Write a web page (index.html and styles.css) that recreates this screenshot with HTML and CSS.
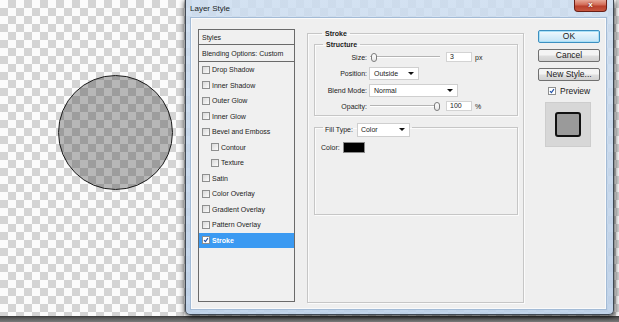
FILE: index.html
```html
<!DOCTYPE html>
<html lang="en">
<head>
  <meta charset="UTF-8">
  <meta name="viewport" content="width=device-width, initial-scale=1.0">
  <title>Layer Style</title>
  <link rel="stylesheet" href="styles.css">
</head>
<body>
  <main class="stage">
    <div class="circle"></div>

    <section class="window">
      <header class="titlebar">
        <span class="title">Layer Style</span>
        <span class="close">x</span>
      </header>

      <div class="client">
        <ul class="style-list">
          <li class="head">Styles</li>
          <li class="head">Blending Options: Custom</li>
          <li><span class="check"></span>Drop Shadow</li>
          <li><span class="check"></span>Inner Shadow</li>
          <li><span class="check"></span>Outer Glow</li>
          <li><span class="check"></span>Inner Glow</li>
          <li><span class="check"></span>Bevel and Emboss</li>
          <li class="sub"><span class="check"></span>Contour</li>
          <li class="sub"><span class="check"></span>Texture</li>
          <li><span class="check"></span>Satin</li>
          <li><span class="check"></span>Color Overlay</li>
          <li><span class="check"></span>Gradient Overlay</li>
          <li><span class="check"></span>Pattern Overlay</li>
          <li class="selected">
            <span class="check checked">
              <svg viewBox="0 0 8 8"><path d="M1.3 4.2 L3.2 6.2 L6.6 1.4" /></svg>
            </span>Stroke
          </li>
        </ul>

        <fieldset class="group stroke">
          <legend>Stroke</legend>

          <fieldset class="group structure">
            <legend>Structure</legend>
            <div class="form">
              <label>Size:</label>
              <div class="row">
                <div class="slider"><span class="thumb"></span></div>
                <span class="field">3</span>
                <span class="unit">px</span>
              </div>

              <label>Position:</label>
              <div class="row">
                <span class="select position">Outside</span>
              </div>

              <label>Blend Mode:</label>
              <div class="row">
                <span class="select blend">Normal</span>
              </div>

              <label>Opacity:</label>
              <div class="row">
                <div class="slider max"><span class="thumb"></span></div>
                <span class="field">100</span>
                <span class="unit">%</span>
              </div>
            </div>
          </fieldset>

          <fieldset class="group fill">
            <legend>
              <span class="legend-label">Fill Type:</span>
              <span class="select filltype">Color</span>
            </legend>
            <div class="color-row">
              <span>Color:</span>
              <span class="swatch"></span>
            </div>
          </fieldset>
        </fieldset>

        <div class="buttons">
          <button class="btn default">OK</button>
          <button class="btn">Cancel</button>
          <button class="btn">New Style...</button>
          <div class="preview-check">
            <span class="check checked">
              <svg viewBox="0 0 8 8"><path d="M1.3 4.2 L3.2 6.2 L6.6 1.4" /></svg>
            </span>Preview
          </div>
          <div class="preview">
            <span class="preview-shape"></span>
          </div>
        </div>
      </div>
    </section>
  </main>
  <div class="edge"></div>
</body>
</html>
```

FILE: styles.css
```css
/* reset */
*,
*::before,
*::after {
  box-sizing: border-box;
}
body {
  margin: 0;
  width: 619px;
  height: 322px;
  overflow: hidden;
  display: flex;
  flex-direction: column;
  font-family: "Liberation Sans", Arial, sans-serif;
  font-size: 7px;
  color: #222;
}
ul {
  margin: 0;
  padding: 0;
  list-style: none;
}

/* canvas */
.stage {
  position: relative;
  flex: 1;
  background-color: #fff;
  background-image: conic-gradient(#d4d4d4 25%, #fbfbfb 0 50%, #d4d4d4 0 75%, #fbfbfb 0);
  background-size: 16px 16px;
}
.circle {
  position: absolute;
  left: 58px;
  top: 75px;
  width: 115px;
  height: 115px;
  border-radius: 50%;
  border: 1.5px solid #1c1c1c;
  background-image: conic-gradient(#9d9d9d 25%, #b7b7b7 0 50%, #9d9d9d 0 75%, #b7b7b7 0);
  background-size: 16px 16px;
  background-position: -59px -76px;
}
.edge {
  height: 6px;
  background: linear-gradient(#3b3b3b, #5a5a5a 40%, #7a7a7a);
}

/* window */
.window {
  position: absolute;
  left: 185px;
  top: 0;
  width: 429px;
  height: 315px;
  display: flex;
  flex-direction: column;
  padding: 0 6px 4px 4px;
  border: 1px solid #3f4853;
  border-top: 0;
  border-radius: 0 0 5px 5px;
  background: linear-gradient(rgba(204, 221, 240, 0.85), rgba(188, 208, 232, 0.9));
  box-shadow: -2px 1px 4px rgba(0, 0, 0, 0.4), 2px 2px 4px rgba(0, 0, 0, 0.5);
}
.titlebar {
  height: 17px;
  display: flex;
  justify-content: space-between;
  align-items: flex-start;
}
.title {
  font-size: 8px;
  line-height: 17px;
  color: #1b1f26;
}
.close {
  width: 33px;
  height: 12px;
  border: 1px solid #6b1f16;
  border-top: 0;
  border-radius: 0 0 4px 4px;
  background: linear-gradient(#e7a796, #d26a55 45%, #b9402c 55%, #c8573f);
  color: #fff;
  font-weight: bold;
  font-size: 8px;
  line-height: 10px;
  text-align: center;
  text-shadow: 0 0 2px #4a0c05;
}
.client {
  flex: 1;
  display: grid;
  grid-template-columns: 97px 217px 62px;
  column-gap: 12px;
  align-items: start;
  padding: 11px 0 0 7px;
  border: 1px solid #a3bbd6;
  background: #efefef;
  box-shadow: inset 0 0 0 1px #fafafa;
}

/* styles list */
.style-list {
  height: 273px;
  border: 1px solid #6a6a6a;
  background: #f0f0f0;
}
.style-list li {
  display: flex;
  align-items: center;
  gap: 2px;
  height: 15.5px;
  padding-left: 3px;
}
.style-list .head {
  height: 15px;
  border-bottom: 1px solid #6a6a6a;
}
.style-list .head + .head {
  height: 17px;
}
.style-list .sub {
  padding-left: 12px;
}
.style-list .selected {
  background: #3b9af2;
  color: #fff;
  font-weight: bold;
}
.check {
  flex: none;
  width: 8px;
  height: 8px;
  border: 1px solid #8e8f8f;
  background: linear-gradient(135deg, #d9d9d9, #fbfbfb);
}
.check svg {
  display: block;
  width: 6px;
  height: 6px;
}
.check path {
  fill: none;
  stroke: #1e4fa6;
  stroke-width: 1.5;
}
.checked {
  background: #fff;
}

/* group boxes */
.group {
  margin: 0;
  padding: 0;
  min-width: 0;
  border: 1px solid #c6c6c6;
  box-shadow: 1px 1px 0 #fbfbfb, inset 1px 1px 0 #fbfbfb;
}
.group > legend {
  margin-left: 8px;
  padding: 0 3px;
  line-height: 9px;
  font-weight: bold;
}
.stroke {
  height: 274px;
  padding: 0 5px 0 6px;
}
.structure {
  margin-top: 2px;
  height: 76px;
}
.fill {
  margin-top: 7px;
  height: 92px;
}
.fill > legend {
  display: flex;
  align-items: flex-start;
  gap: 4px;
  height: 8px;
  margin-left: 8px;
  padding: 0 2px;
  font-weight: normal;
}
.legend-label {
  line-height: 14px;
}
.form {
  display: grid;
  grid-template-columns: 52px auto;
  grid-template-rows: 12px 14px 14px 12px;
  column-gap: 2px;
  row-gap: 3px;
  align-items: center;
  padding-top: 2px;
}
.form label {
  text-align: right;
}
.row {
  display: flex;
  align-items: center;
}
.slider {
  position: relative;
  display: flex;
  align-items: center;
  width: 70px;
  height: 10px;
  margin-left: 1px;
  padding: 0 1px;
}
.slider::before {
  content: "";
  position: absolute;
  left: 0;
  right: 0;
  top: 4px;
  height: 2px;
  border-top: 1px solid #b4b4b4;
  border-bottom: 1px solid #fff;
}
.slider.max {
  justify-content: flex-end;
  padding-right: 0;
}
.thumb {
  position: relative;
  width: 6px;
  height: 9px;
  border: 1px solid #7c7c7c;
  border-radius: 3px;
  background: linear-gradient(#fff, #e6e6e6);
}
.field {
  width: 26px;
  height: 10px;
  margin-left: 6px;
  padding-left: 3px;
  border: 1px solid #d3d3d3;
  background: #fff;
  line-height: 8px;
}
.unit {
  margin-left: 3px;
}
.select {
  position: relative;
  display: block;
  flex: none;
  height: 13px;
  padding-left: 4px;
  border: 1px solid #cfcfcf;
  background: #fff;
  line-height: 11px;
}
.select::after {
  content: "";
  position: absolute;
  right: 4px;
  top: 4px;
  border-left: 3px solid transparent;
  border-right: 3px solid transparent;
  border-top: 3px solid #111;
}
.position {
  width: 50px;
}
.blend {
  width: 89px;
}
.filltype {
  width: 53px;
  height: 14px;
  padding-left: 3px;
  line-height: 12px;
}
.color-row {
  display: flex;
  align-items: center;
  gap: 3px;
  padding: 11px 0 0 6px;
}
.swatch {
  width: 22px;
  height: 11px;
  border: 1px solid #8a8a8a;
  background: #000;
}

/* buttons */
.buttons {
  margin: 1px 0 0 2px;
}
.btn {
  display: block;
  width: 62px;
  height: 13px;
  margin: 0 0 6px;
  padding: 0;
  border: 1px solid #707070;
  border-radius: 2px;
  background: linear-gradient(#f4f4f4 0 45%, #dedede 55%, #d2d2d2);
  font: 8.5px "Liberation Sans", Arial, sans-serif;
  line-height: 11px;
  color: #1a1a1a;
}
.btn.default {
  border-color: #3c8fc0;
  background: linear-gradient(#f1f9fd, #d9eefa 50%, #c4e4f6);
  box-shadow: inset 0 0 0 1px #a9e0f7;
}
.preview-check {
  display: flex;
  align-items: center;
  gap: 4px;
  height: 8px;
  margin: 0 0 7px 10px;
  font-size: 8.5px;
}
.preview {
  display: flex;
  justify-content: center;
  align-items: center;
  width: 46px;
  height: 45px;
  margin-left: 7px;
  border: 1px solid #cdcdcd;
  background: #d7d7d7;
}
.preview-shape {
  width: 26px;
  height: 25px;
  border: 2px solid #111;
  border-radius: 3px;
  background: #9a9a9a;
}
```
